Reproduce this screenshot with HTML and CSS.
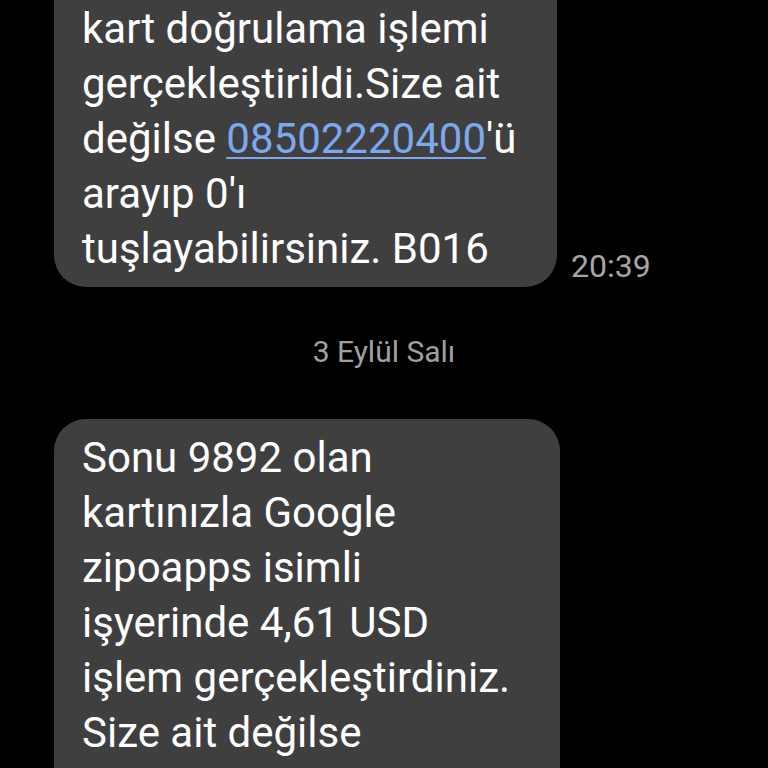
FILE: index.html
```html
<!DOCTYPE html>
<html lang="tr">
<head>
<meta charset="utf-8">
<link rel="stylesheet" href="styles.css">
</head>
<body>
<main class="thread">
  <div class="row first">
    <div class="bubble top-cut">
      kart doğrulama işlemi<br>
      gerçekleştirildi.Size ait<br>
      değilse <a class="link" href="#">08502220400</a>'ü<br>
      arayıp 0'ı<br>
      tuşlayabilirsiniz. B016
    </div>
    <span class="time">20:39</span>
  </div>
  <div class="date">3 Eylül Salı</div>
  <div class="row">
    <div class="bubble bottom-cut">
      Sonu 9892 olan<br>
      kartınızla Google<br>
      zipoapps isimli<br>
      işyerinde 4,61 USD<br>
      işlem gerçekleştirdiniz.<br>
      Size ait değilse
    </div>
  </div>
</main>
</body>
</html>
```
FILE: styles.css
```css
html, body {
  margin: 0;
  padding: 0;
  background: #000;
  height: 768px;
  overflow: hidden;
}
.thread {
  display: flex;
  flex-direction: column;
  padding-left: 54px;
  font-family: Roboto, "Noto Sans", sans-serif;
}
.row {
  display: flex;
  align-items: flex-end;
  gap: 14px;
}
.first {
  margin-top: -30px;
}
.bubble {
  background: #3f3f3f;
  color: #fff;
  font-size: 42px;
  line-height: 55px;
  border-radius: 32px;
  padding: 11px 24px 11px 28px;
  box-sizing: border-box;
}
.top-cut {
  padding-top: 31px;
  width: 503px;
}
.bottom-cut {
  width: 506px;
  padding-bottom: 60px;
}
.link {
  color: #7ca8f0;
  text-decoration: underline;
  text-decoration-thickness: 2px;
  text-underline-offset: 4px;
}
.time {
  color: #a6a6a6;
  font-size: 32px;
  line-height: 34px;
  margin-bottom: 4px;
}
.date {
  text-align: center;
  color: #a0a0a0;
  font-size: 30px;
  line-height: 34px;
  margin: 48px 0 50px -54px;
}
```
